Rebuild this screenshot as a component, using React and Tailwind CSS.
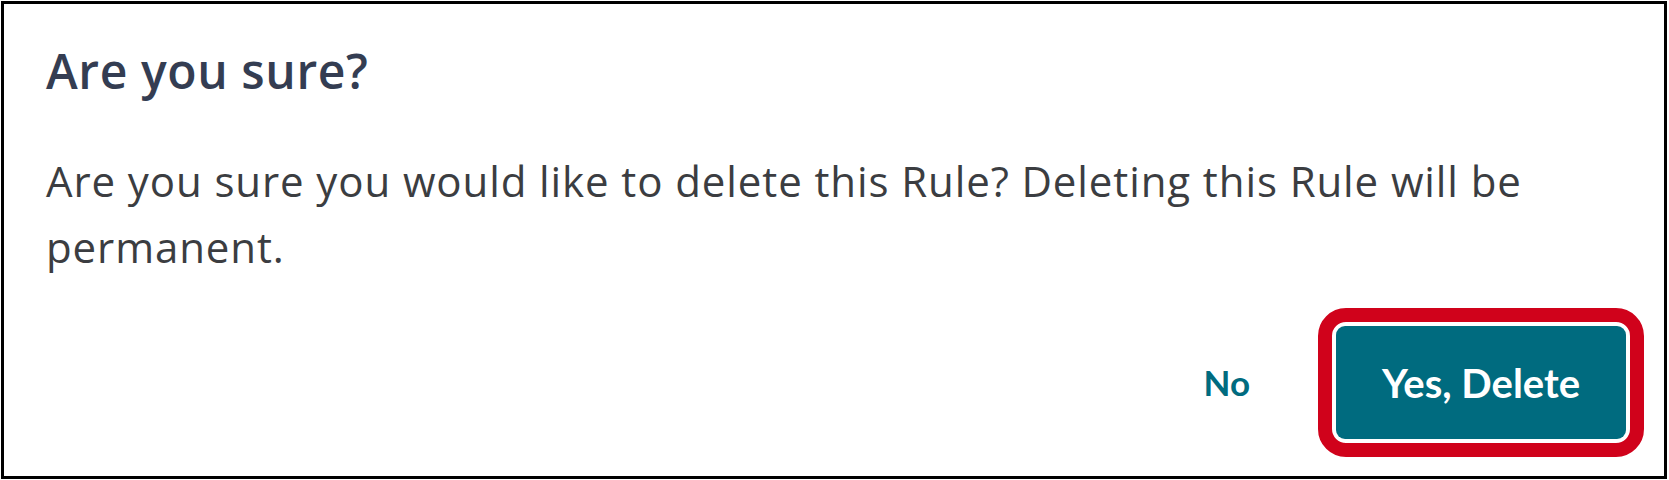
import React from "react";

const lato = { fontFamily: "Lato, 'Liberation Sans', sans-serif" };
const openSans = { fontFamily: "'Open Sans', 'Liberation Sans', sans-serif" };

function App() {
  return (
    <div className="w-[1669px] h-[480px] bg-white pt-px pl-px">
      <div className="w-[1666px] h-[478px] border-[3px] border-black flex flex-col">
        <h2
          className="mt-[43px] ml-[42px] text-[48px] leading-[48px] font-semibold tracking-[0.6px] text-[#343d52]"
          style={openSans}
        >
          Are you sure?
        </h2>
        <p
          className="mt-[53px] ml-[42px] mr-[40px] text-[42px] leading-[66px] tracking-[0.9px] text-[#3b3d41]"
          style={openSans}
        >
          Are you sure you would like to delete this Rule? Deleting this Rule
          will be permanent.
        </p>
        <div className="flex justify-end items-center mt-[28px] pr-[20px]">
          <button
            className="text-[35px] font-bold text-[#006b7f] mr-[68px]"
            style={lato}
          >
            No
          </button>
          <div className="border-[14px] border-[#d0021b] rounded-[28px] p-[4px] bg-white">
            <button
              className="w-[290px] h-[113px] bg-[#006b7f] rounded-[9px] text-white text-[40px] font-bold flex items-center justify-center"
              style={lato}
            >
              Yes, Delete
            </button>
          </div>
        </div>
      </div>
    </div>
  );
}

export default App;
